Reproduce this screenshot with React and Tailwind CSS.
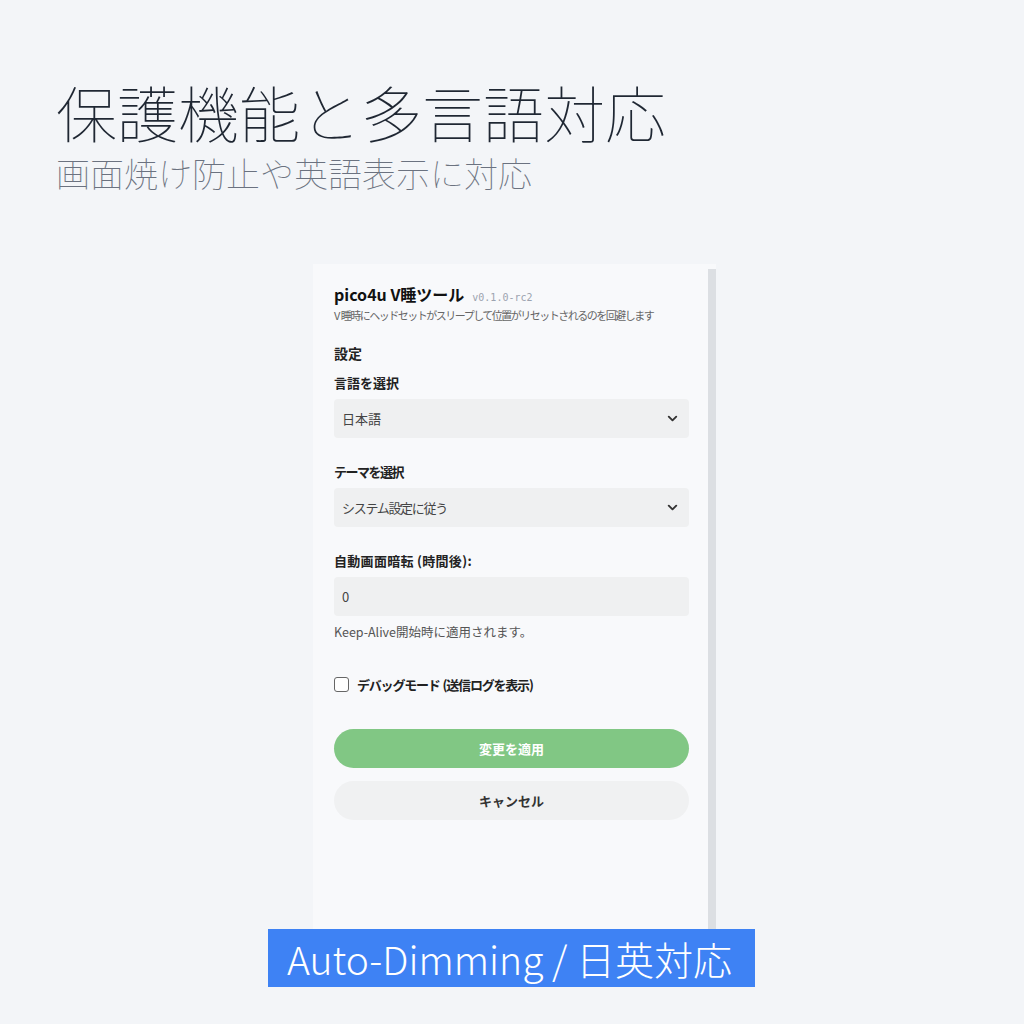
import { ChevronDown } from "lucide-react";

const cjk = { fontFamily: '"Noto Sans CJK JP", "Noto Sans", sans-serif' };
const ui = { fontFamily: '"Noto Sans", "Noto Sans CJK JP", sans-serif' };

const Select = ({ value, tight }) => (
  <div className="flex items-center justify-between h-[39px] rounded-[4px] bg-[#eff0f1] pl-2 pr-[9px] text-[13px] text-[#444]">
    <span className={tight}>{value}</span>
    <ChevronDown size={15} strokeWidth={3} className="text-[#333]" />
  </div>
);

const Label = ({ children, tight }) => (
  <div className={`text-[13px] font-bold text-[#222] leading-[16px] mb-2 ${tight || ""}`}>{children}</div>
);

export default function App() {
  return (
    <div className="min-h-screen w-[1024px] h-[1024px] bg-[#f3f5f8] flex flex-col" style={cjk}>
      <div className="pl-[56px] pt-[80px]">
        <h1 className="text-[61px] leading-[64px] font-thin text-[#1f2733]">保護機能と多言語対応</h1>
        <p className="text-[34px] leading-[40px] font-thin text-[#6b7280] mt-[9px]">
          画面焼け防止や英語表示に対応
        </p>
      </div>

      <div className="ml-[313px] mt-[71px] w-[403px] h-[665px] bg-[#f8f9fb] flex" style={ui}>
        <div className="flex-1 pl-[21px] pr-[19px] pt-[18px]">
          <div className="flex items-baseline gap-2">
            <span className="text-[16px] font-bold text-[#111]" style={cjk}>pico4u V睡ツール</span>
            <span className="text-[10px] text-[#9ca3af]" style={{ fontFamily: '"DejaVu Sans Mono", monospace' }}>
              v0.1.0-rc2
            </span>
          </div>
          <p className="text-[11px] leading-[14px] text-[#666] mt-[2px] whitespace-nowrap" style={cjk}>
            <span className="tracking-[0.5px]">V</span>
            <span className="tracking-[-1.5px]">睡時にヘッドセットがスリープして位置がリセットされるのを回避します</span>
          </p>

          <div className="text-[14px] font-bold text-[#222] mt-[21px] mb-[11px]" style={cjk}>設定</div>

          <div style={cjk}>
            <Label>言語を選択</Label>
            <Select value="日本語" />

            <div className="mt-[26px]">
              <Label tight="tracking-[-1.5px]">テーマを選択</Label>
              <Select value="システム設定に従う" tight="tracking-[-1.3px]" />
            </div>

            <div className="mt-[26px]">
              <Label tight="tracking-[0.3px]">自動画面暗転 (時間後):</Label>
              <div className="flex items-center h-[39px] rounded-[4px] bg-[#eff0f1] px-2 text-[13px] text-[#444]">0</div>
              <p className="text-[12.5px] text-[#555] mt-[7px]">Keep-Alive開始時に適用されます。</p>
            </div>

            <label className="flex items-center gap-2 mt-[33px]">
              <span className="w-[15px] h-[15px] rounded-[3px] border-[1.5px] border-[#666] bg-white" />
              <span className="text-[13px] font-bold text-[#222] tracking-[-1.2px]">
                デバッグモード<span className="tracking-normal"> </span>(送信ログを表示)
              </span>
            </label>

            <button className="mt-[35px] w-full h-[39px] rounded-full bg-[#81c784] text-white text-[13px] font-bold">
              変更を適用
            </button>
            <button className="mt-[13px] w-full h-[39px] rounded-full bg-[#f0f1f2] text-[#333] text-[13px] font-bold">
              キャンセル
            </button>
          </div>
        </div>
        <div className="w-[8px] mt-[5px] bg-[#dcdfe3]" />
      </div>

      <div className="ml-[268px] w-[487px] h-[58px] bg-[#3e82f4] flex items-center pl-[19px]">
        <span className="text-[39px] font-extralight text-white leading-none">Auto-Dimming / 日英対応</span>
      </div>
    </div>
  );
}
